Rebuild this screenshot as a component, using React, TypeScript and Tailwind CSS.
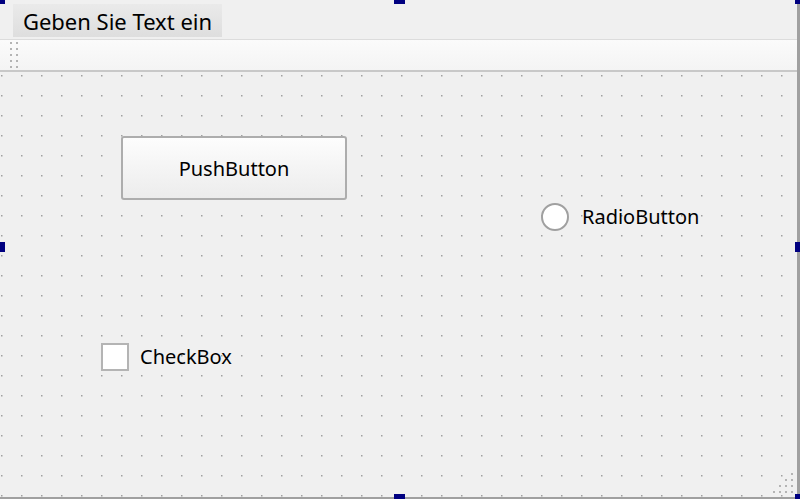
import React from 'react';

const font = { fontFamily: '"Noto Sans", "Open Sans", sans-serif' };

const Handle: React.FC<{ className: string }> = ({ className }) => (
  <div className={`absolute bg-[#000080] ${className}`} />
);

export default function App() {
  return (
    <div className="relative w-[800px] h-[499px] overflow-hidden bg-[#f0f0f0] text-black" style={font}>
      <div className="flex flex-col h-full border-r-[3px] border-b-2 border-[#a0a0a0]">
        {/* menu bar */}
        <div className="h-[39px] flex items-start pt-[4px] pl-[13px] bg-[#f0f0f0]">
          <div className="h-[33px] w-[209px] flex items-center justify-center text-[22px] leading-none bg-gradient-to-b from-[#eaeaea] to-[#dedede]">
            Geben Sie Text ein
          </div>
        </div>
        {/* tool bar */}
        <div className="h-[33px] flex items-center pl-[10px] border-t border-[#dcdcdc] border-b-2 border-b-[#c8c8c8] bg-gradient-to-b from-[#fbfbfb] to-[#f4f4f4]">
          <div className="grid grid-cols-2 gap-x-[4px] gap-y-[4px]">
            {Array.from({ length: 10 }).map((_, i) => (
              <span key={i} className="w-[2px] h-[2px] bg-[#b4b4b4]" />
            ))}
          </div>
        </div>
        {/* form canvas */}
        <div className="relative flex-1">
          <svg className="absolute inset-0 w-full h-full">
            <defs>
              <pattern id="grid" x="1" y="3" width="20" height="20" patternUnits="userSpaceOnUse">
                <rect x="0" y="0" width="1.5" height="1.5" fill="#a0a0a0" />
              </pattern>
            </defs>
            <rect width="100%" height="100%" fill="url(#grid)" />
          </svg>

          <button className="absolute left-[121px] top-[64px] w-[226px] h-[64px] rounded-[3px] border-2 border-[#adadad] bg-gradient-to-b from-[#fdfdfd] to-[#ececec] text-[20px] flex items-center justify-center pt-[1px]">
            PushButton
          </button>

          <div className="absolute left-[541px] top-[130px] flex items-center gap-[13px] text-[20px]">
            <span className="w-[28px] h-[28px] rounded-full border-2 border-[#a0a0a0] bg-white" />
            <span>RadioButton</span>
          </div>

          <div className="absolute left-[101px] top-[270px] flex items-center gap-[11px] text-[20px]">
            <span className="w-[28px] h-[28px] border-2 border-[#b4b4b4] bg-white" />
            <span>CheckBox</span>
          </div>

          {/* size grip */}
          <svg className="absolute right-[2px] bottom-[2px] w-[24px] h-[24px]" viewBox="0 0 24 24">
            {[
              [20, 2], [20, 8], [14, 8], [20, 14], [14, 14], [8, 14], [20, 20], [14, 20], [8, 20], [2, 20],
            ].map(([x, y], i) => (
              <rect key={i} x={x} y={y} width="2" height="2" fill="#b4b4b4" />
            ))}
          </svg>
        </div>
      </div>

      {/* selection handles */}
      <Handle className="left-0 top-0 w-[5px] h-[4px]" />
      <Handle className="left-[394px] top-0 w-[11px] h-[4px]" />
      <Handle className="right-0 top-0 w-[5px] h-[4px]" />
      <Handle className="left-0 top-[242px] w-[5px] h-[10px]" />
      <Handle className="right-0 top-[242px] w-[5px] h-[10px]" />
      <Handle className="left-[394px] bottom-0 w-[11px] h-[5px]" />
      <Handle className="right-0 bottom-0 w-[5px] h-[5px]" />
    </div>
  );
}
